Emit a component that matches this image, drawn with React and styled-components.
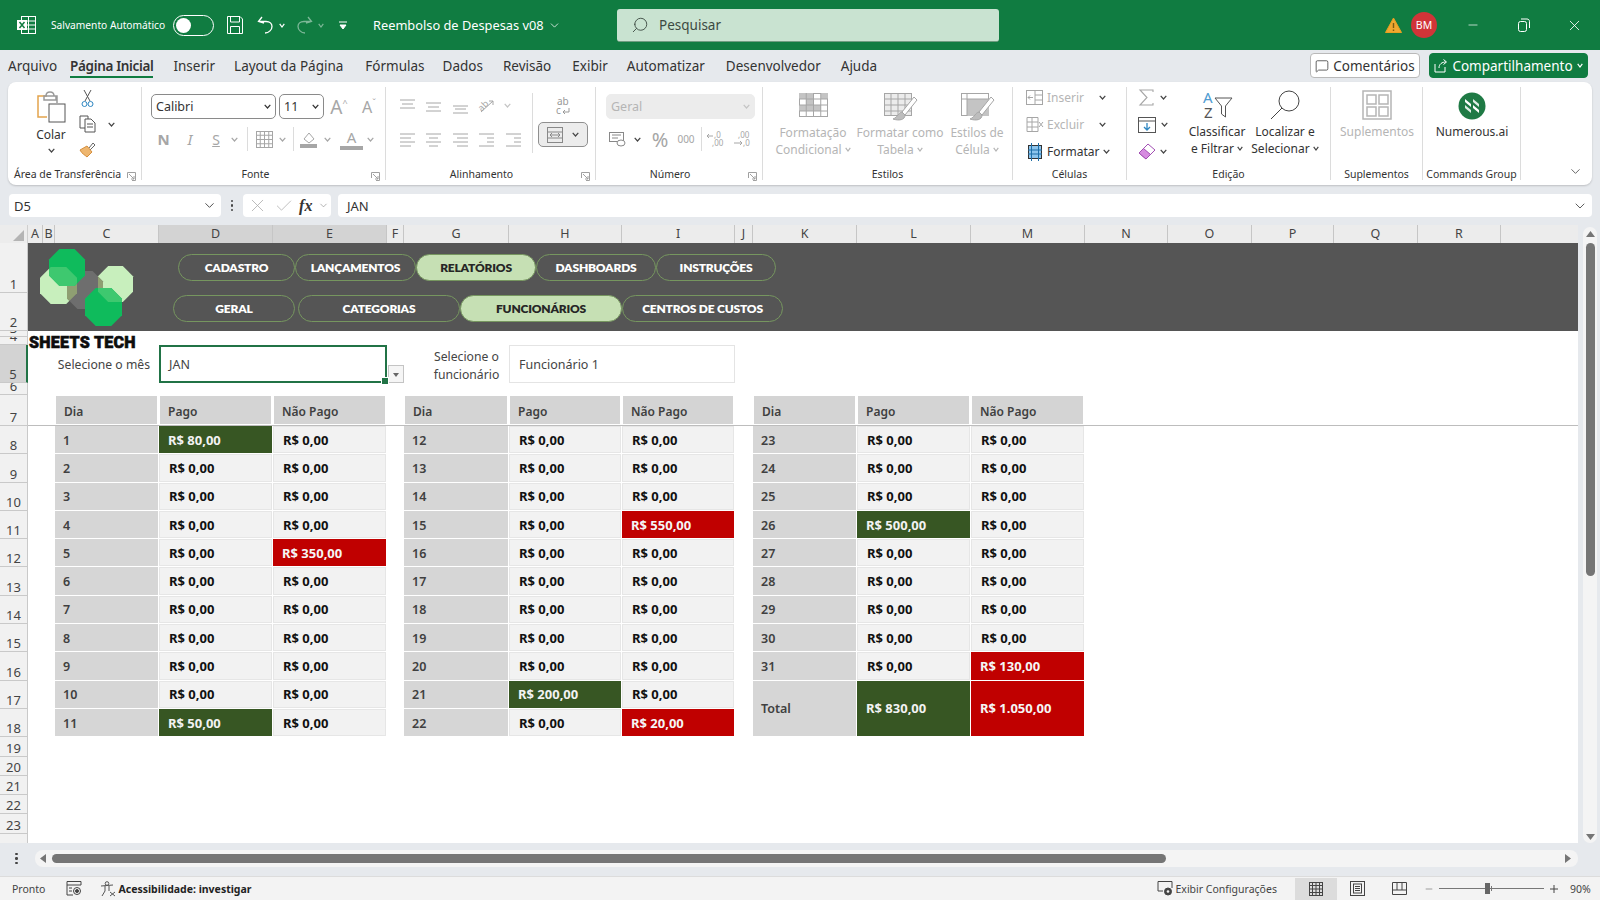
import React from 'react';
import styled, { createGlobalStyle } from 'styled-components';
import { Minus, X, ChevronDown, Search, MessageSquare, Check } from 'lucide-react';

const UI = '"Noto Sans", "Open Sans", sans-serif';
const MUTED = '#a6a6a6';

const COLS = [
  ['A', 15], ['B', 12], ['C', 104], ['D', 114], ['E', 114], ['F', 17], ['G', 105], ['H', 113], ['I', 113], ['J', 18],
  ['K', 104], ['L', 114], ['M', 114], ['N', 83], ['O', 84], ['P', 82], ['Q', 84], ['R', 83], ['', 77],
];
const ROWS = [50, 38, 6, 8, 38, 12, 31, ...Array(11).fill(28.3), ...Array(5).fill(19.3), 11];
const colTemplate = COLS.map(c => c[1] + 'px').join(' ');
const rowTemplate = ROWS.map(r => r + 'px').join(' ');

const Global = createGlobalStyle`
  html, body { margin: 0; padding: 0; width: 1600px; height: 900px; overflow: hidden; background: #e6e9ed; }
  body { font-family: ${UI}; color: #333; }
  * { box-sizing: border-box; }
`;

const Shell = styled.div`
  width: 1600px;
  height: 900px;
  display: flex;
  flex-direction: column;
`;

/* title bar */
const TitleBar = styled.div`
  height: 50px;
  flex: none;
  background: #107c41;
  color: #fff;
  display: flex;
  align-items: center;
  padding-left: 16px;
`;
const AutoSave = styled.span`
  font-size: 10.2px;
  margin-left: 15px;
  width: 122px;
  white-space: nowrap;
`;
const Toggle = styled.div`
  width: 41px;
  height: 21px;
  border: 1.5px solid #fff;
  border-radius: 11px;
  padding: 2px;
  margin-right: 13px;
  &::before {
    content: '';
    display: block;
    width: 15px;
    height: 15px;
    border-radius: 50%;
    background: #fff;
  }
`;
const BarSlot = styled.div`
  width: ${p => p.$w}px;
  margin-left: ${p => p.$ml || 0}px;
  flex: none;
  display: flex;
  justify-content: center;
  align-items: center;
  opacity: ${p => (p.$dim ? 0.45 : 1)};
`;
const DocTitle = styled.div`
  margin-left: 26px;
  width: 244px;
  font-size: 12.8px;
  display: flex;
  align-items: center;
  gap: 4px;
  white-space: nowrap;
`;
const SearchBox = styled.div`
  width: 382px;
  height: 33px;
  background: #c9e3d1;
  border-radius: 3px;
  border-bottom: 1px solid #6f9c80;
  display: flex;
  align-items: center;
  padding-left: 14px;
  gap: 10px;
  color: #3c4a42;
  font-size: 13.5px;
`;
const TitleRight = styled.div`
  margin-left: auto;
  display: flex;
  align-items: center;
`;
const Avatar = styled.div`
  width: 26px;
  height: 26px;
  border-radius: 50%;
  background: #d13438;
  font-size: 10.5px;
  display: flex;
  align-items: center;
  justify-content: center;
  margin: 0 10px 0 9px;
`;
const WinBtn = styled.div`
  width: 51px;
  display: flex;
  justify-content: center;
`;

/* tabs */
const TabBar = styled.div`
  height: 32px;
  flex: none;
  display: flex;
  align-items: flex-start;
  padding-left: 8px;
  position: relative;
`;
const Tab = styled.div`
  height: 28px;
  margin-right: ${p => p.$gap}px;
  padding-top: 5px;
  font-size: 13.5px;
  line-height: 22px;
  color: #333;
  font-weight: ${p => (p.$on ? 600 : 400)};
  letter-spacing: ${p => (p.$on ? '-0.35px' : '0')};
  border-bottom: 2px solid ${p => (p.$on ? '#107c41' : 'transparent')};
  white-space: nowrap;
`;
const TabActions = styled.div`
  position: absolute;
  right: 12px;
  top: 3px;
  display: flex;
  gap: 9px;
`;
const CommentBtn = styled.div`
  width: 110px;
  height: 25px;
  background: #fff;
  border: 1px solid #b9b9b9;
  border-radius: 4px;
  font-size: 13.5px;
  display: flex;
  align-items: center;
  justify-content: center;
  gap: 4px;
`;
const ShareBtn = styled(CommentBtn)`
  width: 159px;
  background: #107c41;
  border-color: #107c41;
  color: #fff;
`;

/* ribbon */
const Ribbon = styled.div`
  height: 103px;
  flex: none;
  margin: 0 8px;
  background: #fff;
  border-radius: 8px;
  box-shadow: 0 1px 2px rgba(0, 0, 0, 0.18);
  display: flex;
  padding-top: 5px;
  position: relative;
`;
const Group = styled.div`
  width: ${p => p.$w}px;
  height: 93px;
  flex: none;
  display: flex;
  flex-direction: column;
  border-right: ${p => (p.$plain ? 'none' : '1px solid #dcdcdc')};
  position: relative;
`;
const GroupBody = styled.div`
  flex: 1;
  display: flex;
  min-height: 0;
  padding: ${p => p.$pad || '0'};
`;
const GroupLabel = styled.div`
  height: 18px;
  font-size: 10.5px;
  line-height: 25px;
  text-align: center;
  color: #333;
  white-space: nowrap;
  padding-right: ${p => p.$shift || 0}px;
`;
const Launcher = styled.svg`
  position: absolute;
  right: 5px;
  bottom: -1px;
`;
const Stack = styled.div`
  display: flex;
  flex-direction: column;
  align-items: ${p => p.$align || 'center'};
  width: ${p => (p.$w ? p.$w + 'px' : 'auto')};
  gap: ${p => p.$gap || 0}px;
  padding-top: ${p => p.$top || 0}px;
  flex: none;
`;
const Row = styled.div`
  display: flex;
  align-items: center;
  height: ${p => p.$h || 25}px;
  margin-top: ${p => p.$mt || 0}px;
  gap: ${p => p.$gap || 0}px;
`;
const Slot = styled.div`
  width: ${p => p.$w}px;
  flex: none;
  display: flex;
  align-items: center;
  justify-content: center;
  color: ${p => (p.$dim ? MUTED : '#444')};
  font-size: ${p => p.$size || 13}px;
  font-weight: ${p => p.$weight || 400};
  font-style: ${p => (p.$italic ? 'italic' : 'normal')};
  text-decoration: ${p => (p.$under ? 'underline' : 'none')};
`;
const Rule = styled.div`
  width: 1px;
  height: ${p => p.$h || 24}px;
  background: #dcdcdc;
  flex: none;
  margin: 0 ${p => p.$m || 0}px;
`;
const DropBox = styled.div`
  width: ${p => p.$w}px;
  height: 25px;
  flex: none;
  border: 1px solid ${p => (p.$off ? '#ececec' : '#8a8a8a')};
  border-radius: 5px;
  background: ${p => (p.$off ? '#ececec' : '#fff')};
  color: ${p => (p.$off ? '#b5b5b5' : '#333')};
  font-size: 12.5px;
  display: flex;
  align-items: center;
  justify-content: space-between;
  padding: 0 4px;
`;
const BigLabel = styled.div`
  font-size: 12px;
  line-height: 17px;
  display: flex;
  align-items: center;
  justify-content: center;
  gap: 3px;
  white-space: nowrap;
  color: ${p => (p.$dim ? '#b5b5b5' : '#333')};
  margin-top: ${p => p.$mt || 0}px;
`;
const MergeBtn = styled.div`
  width: 50px;
  height: 25px;
  border: 1.5px solid #8f8f8f;
  border-radius: 5px;
  background: #ececec;
  display: flex;
  align-items: center;
  justify-content: space-around;
  padding: 0 4px;
  margin-top: 4px;
`;
const CellAction = styled.div`
  height: 22px;
  display: flex;
  align-items: center;
  gap: 4px;
  font-size: 12px;
  color: ${p => (p.$dim ? '#b5b5b5' : '#333')};
  white-space: nowrap;
`;
const ChevSlot = styled.span`
  margin-left: auto;
  display: flex;
`;
const Collapse = styled.div`
  position: absolute;
  right: 9px;
  bottom: 6px;
  color: #444;
  display: flex;
`;
const Sup = styled.span`
  font-size: 9px;
  margin-top: -8px;
`;
const FontColor = styled.div`
  width: 23px;
  margin-left: 6px;
  text-align: center;
  font-size: 15px;
  line-height: 18px;
  color: ${MUTED};
  border-bottom: 4px solid ${MUTED};
  flex: none;
`;
const SmallNum = styled.text`
  font-size: 8px;
  font-family: "Noto Sans", sans-serif;
  fill: ${MUTED};
  stroke: none;
`;

/* formula bar */
const FormulaBar = styled.div`
  height: 23px;
  flex: none;
  margin: 9px 8px 8px 9px;
  display: flex;
  align-items: stretch;
`;
const FBox = styled.div`
  background: #fff;
  border-radius: 4px;
  font-size: 13px;
  display: flex;
  align-items: center;
  width: ${p => (p.$w ? p.$w + 'px' : 'auto')};
  flex: ${p => (p.$w ? 'none' : 1)};
  margin-left: ${p => p.$ml || 0}px;
  padding: ${p => p.$pad || '0 6px'};
  justify-content: space-between;
`;
const Dots = styled.div`
  width: ${p => p.$w || 22}px;
  flex: none;
  display: flex;
  flex-direction: column;
  align-items: center;
  justify-content: center;
  gap: 2px;
  i { width: 2.5px; height: 2.5px; border-radius: 50%; background: #444; display: block; }
`;
const Fx = styled.span`
  font-family: "Liberation Serif", serif;
  font-style: italic;
  font-weight: 700;
  font-size: 16px;
  color: #333;
`;

/* workbook */
const Workbook = styled.div`
  height: 618px;
  flex: none;
  display: grid;
  grid-template-columns: 28px 1550px 22px;
  grid-template-rows: 18px 600px;
`;
const Corner = styled.div`
  background: #ececec;
  border-right: 1px solid #cfcfcf;
  display: flex;
  align-items: flex-end;
  justify-content: flex-end;
  padding: 0 3px 2px 0;
`;
const ColHeads = styled.div`
  display: grid;
  grid-template-columns: ${colTemplate};
  background: #ececec;
`;
const ColHead = styled.div`
  font-size: 12.5px;
  line-height: 18px;
  text-align: center;
  color: #444;
  background: ${p => (p.$on ? '#d3d3d3' : 'transparent')};
  border-right: 1px solid ${p => (p.$last ? 'transparent' : '#c6c6c6')};
  border-bottom: 2px solid ${p => (p.$on ? '#217346' : '#ececec')};
`;
const RowHeads = styled.div`
  display: grid;
  grid-template-rows: ${rowTemplate};
  background: #f1f1f1;
  overflow: hidden;
`;
const RowHead = styled.div`
  overflow: hidden;
  display: flex;
  align-items: ${p => (p.$cut ? 'flex-start' : 'flex-end')};
  padding-top: ${p => (p.$cut ? 6 : 0)}px;
  justify-content: center;
  font-size: 13px;
  line-height: 16px;
  color: #444;
  background: ${p => (p.$on ? '#d3d3d3' : 'transparent')};
  border-bottom: ${p => (p.$cut ? 'none' : '1px solid #c9c9c9')};
  border-right: ${p => (p.$on ? '2px solid #217346' : '1px solid #c9c9c9')};
`;
const Sheet = styled.div`
  background: #fff;
  display: grid;
  grid-template-columns: ${colTemplate};
  grid-template-rows: ${rowTemplate};
  position: relative;
  overflow: hidden;
`;
const Banner = styled.div`
  grid-column: 1 / -1;
  grid-row: 1 / 3;
  background: #555555;
  display: flex;
  padding-left: 12px;
`;
const Logo = styled.svg`
  flex: none;
  margin-top: 6px;
`;
const PillStack = styled.div`
  margin-left: 39px;
  padding-top: 11px;
  display: flex;
  flex-direction: column;
  gap: 14px;
`;
const PillRow = styled.div`
  display: flex;
  padding-left: ${p => p.$indent || 0}px;
`;
const Pill = styled.div`
  width: ${p => p.$w}px;
  height: 27px;
  margin-right: ${p => p.$gap || 0}px;
  border: 1px solid #76965f;
  border-radius: 14px;
  background: ${p => (p.$on ? '#c6e0b4' : 'transparent')};
  color: ${p => (p.$on ? '#262626' : '#fff')};
  font-family: Lato, sans-serif;
  font-weight: 800;
  font-size: 12px;
  letter-spacing: -0.2px;
  display: flex;
  align-items: center;
  justify-content: center;
  white-space: nowrap;
`;
const Brand = styled.div`
  position: absolute;
  left: 1px;
  top: 89px;
  font-family: Roboto, sans-serif;
  font-weight: 900;
  font-size: 16px;
  line-height: 22px;
  color: #0d0d0d;
  white-space: nowrap;
  letter-spacing: 0.3px;
  -webkit-text-stroke: 0.6px #0d0d0d;
`;
const FieldLabel = styled.div`
  grid-column: ${p => p.$col};
  grid-row: 5;
  font-size: 12.2px;
  line-height: 18.5px;
  color: #444;
  display: flex;
  align-items: center;
  justify-content: ${p => (p.$center ? 'center' : 'flex-end')};
  text-align: center;
  padding: ${p => (p.$center ? '4px 0 0 20px' : '3px 9px 0 0')};
  white-space: nowrap;
`;
const MonthField = styled.div`
  grid-column: 4 / 6;
  grid-row: 5;
  border: 2px solid #217346;
  font-size: 12.5px;
  color: #444;
  display: flex;
  align-items: center;
  padding-left: 8px;
  position: relative;
  &::after {
    content: '';
    position: absolute;
    right: -4px;
    bottom: -4px;
    width: 6px;
    height: 6px;
    background: #217346;
    border: 1px solid #fff;
  }
`;
const DropArrow = styled.div`
  grid-column: 6;
  grid-row: 5;
  align-self: end;
  height: 18px;
  border: 1px solid #c4c4c4;
  background: #f5f5f5;
  margin-left: 1px;
  display: flex;
  align-items: center;
  justify-content: center;
  &::before {
    content: '';
    border: 3px solid transparent;
    border-top: 4px solid #666;
    margin-top: 4px;
  }
`;
const EmployeeField = styled.div`
  grid-column: 8 / 10;
  grid-row: 5;
  border: 1px solid #e4e4e4;
  font-size: 12.5px;
  color: #444;
  display: flex;
  align-items: center;
  padding-left: 9px;
`;
const FreezeLine = styled.div`
  grid-column: 1 / -1;
  grid-row: 7;
  align-self: end;
  height: 1px;
  background: #bdbdbd;
`;
const Table = styled.div`
  grid-column: ${p => p.$col} / span 3;
  grid-row: 7 / span 12;
  display: grid;
  grid-template-columns: subgrid;
  grid-template-rows: subgrid;
`;
const TONES = {
  head: 'background:#d4d4d4;color:#404040;font-size:12px;font-weight:600;padding-top:2px;',
  dia: 'background:#d6d6d6;color:#404040;font-size:12.5px;font-weight:600;padding-top:1px;',
  val: 'background:#f2f2f2;color:#111;border:1px solid #e6e6e6;font-size:13px;font-weight:700;',
  green: 'background:#375623;color:#f2f2f2;font-size:13px;font-weight:700;',
  red: 'background:#c00000;color:#f5f5f5;font-size:13px;font-weight:700;',
};
const Cell = styled.div`
  ${p => TONES[p.$tone]}
  display: flex;
  align-items: center;
  padding-left: ${p => (p.$tone === 'head' || p.$tone === 'dia' ? 8 : 9)}px;
  margin: ${p => (p.$tone === 'head' ? '1px 2px 2px 1px' : '0 1px 1px 0')};
  grid-row: ${p => (p.$span ? 'span 2' : 'auto')};
  white-space: nowrap;
`;

/* scrollbars */
const VTrack = styled.div`
  grid-column: 3;
  grid-row: 1 / 3;
  margin: 2px 3px 0 5px;
  background: #f4f4f4;
  border-radius: 7px;
  display: flex;
  flex-direction: column;
  align-items: center;
  padding-top: 4px;
`;
const VThumb = styled.div`
  width: 9px;
  height: 333px;
  margin-top: 6px;
  background: #757575;
  border-radius: 5px;
`;
const VDown = styled.div`
  margin-top: auto;
  margin-bottom: 3px;
  display: flex;
`;
const HBar = styled.div`
  height: 17px;
  flex: none;
  margin: 7px 22px 9px 0;
  display: flex;
  align-items: center;
`;
const HTrack = styled.div`
  flex: 1;
  height: 17px;
  background: #f4f4f4;
  border-radius: 8px;
  margin-left: 2px;
  display: flex;
  align-items: center;
  padding: 0 4px 0 5px;
`;
const HThumb = styled.div`
  width: 1114px;
  height: 9px;
  margin-left: 6px;
  background: #757575;
  border-radius: 5px;
`;
const HEnd = styled.div`
  margin-left: auto;
  display: flex;
  margin-right: 3px;
`;

/* status bar */
const StatusBar = styled.div`
  flex: 1;
  background: #f3f3f3;
  border-top: 1px solid #dcdcdc;
  display: flex;
  align-items: center;
  padding-left: 12px;
  font-size: 10.5px;
  color: #444;
`;
const StatusItem = styled.div`
  display: flex;
  align-items: center;
  gap: ${p => (p.$tight ? 0 : 2)}px;
  margin-left: ${p => p.$ml || 0}px;
  font-weight: ${p => (p.$bold ? 700 : 400)};
  color: ${p => (p.$bold ? '#222' : '#444')};
  white-space: nowrap;
`;
const ViewBtn = styled.div`
  width: 42px;
  height: 22px;
  display: flex;
  align-items: center;
  justify-content: center;
  background: ${p => (p.$on ? '#dcdcdc' : 'transparent')};
`;
const ZoomSlider = styled.div`
  width: 105px;
  height: 1px;
  background: #777;
  position: relative;
  margin: 0 4px 0 3px;
  &::before {
    content: '';
    position: absolute;
    left: 46px;
    top: -5px;
    width: 5px;
    height: 11px;
    background: #666;
  }
  &::after {
    content: '';
    position: absolute;
    left: 52px;
    top: -2px;
    width: 1px;
    height: 5px;
    background: #777;
  }
`;
const StatusText = styled.span`
  margin-left: 10px;
`;

/* icons */
const Ico = ({ w, h = w, c = '#666', sw = 1, children, fill = 'none' }) => (
  <svg width={w} height={h} viewBox={`0 0 ${w} ${h}`} fill={fill} stroke={c} strokeWidth={sw} style={{ flex: 'none', display: 'block', overflow: 'visible' }}>
    {children}
  </svg>
);
const Chev = ({ c = '#444', w = 7 }) => (
  <Ico w={w} h={5} c={c} sw={1.2}><path d={`M0.7 0.8 L${w / 2} 4 L${w - 0.7} 0.8`} /></Ico>
);
const Lines = ({ ys, xs, c = MUTED }) => (
  <Ico w={17} h={16} c={c}>
    {ys.map((y, i) => <path key={i} d={`M${xs[i][0]} ${y}H${xs[i][1]}`} />)}
  </Ico>
);
const GridIcon = ({ c = '#555', w = 29, h = 24, fills = [] }) => (
  <Ico w={w} h={h} c={c}>
    <rect x=".5" y=".5" width={w - 1} height={h - 1} />
    {fills.map((f, i) => <rect key={i} x={f[0]} y={f[1]} width={f[2]} height={f[3]} fill="#c4c4c4" stroke="none" />)}
    {[1, 2, 3].map(i => <path key={i} d={`M${(w / 4) * i} 0V${h}`} />)}
    {[1, 2, 3].map(i => <path key={'y' + i} d={`M0 ${(h / 4) * i}H${w}`} />)}
  </Ico>
);
const Brush = () => (
  <g>
    <path d="M30 4 L18 19 L21 22 L33 7 Z" fill="#fff" stroke="#a6a6a6" />
    <path d="M18 19 C14 20 14 24 9 26 C15 28 21 27 21 22 Z" fill="#bdbdbd" stroke="#a6a6a6" />
  </g>
);
const GridMerge = () => (
  <Ico w={16} h={16} c="#888">
    <rect x=".5" y=".5" width="15" height="15" />
    <path d="M0 5H16M0 11H16M3 8H13M3 8L5 6M3 8L5 10M13 8L11 6M13 8L11 10" />
  </Ico>
);

const octa = (x, y, w, h) => {
  const c = Math.min(w, h) * 0.29;
  return `${x + c},${y} ${x + w - c},${y} ${x + w},${y + c} ${x + w},${y + h - c} ${x + w - c},${y + h} ${x + c},${y + h} ${x},${y + h - c} ${x},${y + c}`;
};
const LIGHT_L = octa(0, 18, 37, 37);
const LIGHT_R = octa(58, 17, 35, 36);
const GRAY = octa(27, 22, 36, 38);
const DARK_T = octa(9, 0, 36, 37);
const DARK_B = octa(45, 39, 37, 38);

const LogoMark = () => (
  <Logo width="94" height="78" viewBox="0 0 94 78">
    <defs>
      <clipPath id="dt"><polygon points={DARK_T} /></clipPath>
      <clipPath id="db"><polygon points={DARK_B} /></clipPath>
      <clipPath id="gr"><polygon points={GRAY} /></clipPath>
    </defs>
    <polygon points={LIGHT_L} fill="#c8efbd" />
    <polygon points={LIGHT_R} fill="#c8efbd" />
    <polygon points={GRAY} fill="#6e6e6e" />
    <g clipPath="url(#gr)">
      <polygon points={LIGHT_L} fill="#8f9f72" />
      <polygon points={LIGHT_R} fill="#8f9f72" />
    </g>
    <polygon points={DARK_T} fill="#0fbb5c" />
    <polygon points={DARK_B} fill="#0fbb5c" />
    <g clipPath="url(#dt)"><polygon points={LIGHT_L} fill="#3ec86f" /></g>
    <g clipPath="url(#db)"><polygon points={LIGHT_R} fill="#3ec86f" /></g>
  </Logo>
);

const Launch = () => (
  <Launcher width="9" height="9" viewBox="0 0 9 9" fill="none" stroke="#a0a0a0">
    <path d="M.5 6V.5H8.5V8.5H5M2 2L7 7M7 4V7H4" />
  </Launcher>
);

/* data */
const TOP_TABS = [['Arquivo', 13], ['Página Inicial', 20], ['Inserir', 19], ['Layout da Página', 22], ['Fórmulas', 18], ['Dados', 20], ['Revisão', 21], ['Exibir', 19], ['Automatizar', 21], ['Desenvolvedor', 20], ['Ajuda', 0]];
const NAV_1 = [['CADASTRO', 117], ['LANÇAMENTOS', 121], ['RELATÓRIOS', 120, true], ['DASHBOARDS', 120], ['INSTRUÇÕES', 120]];
const NAV_2 = [['GERAL', 122, false, 3], ['CATEGORIAS', 162], ['FUNCIONÁRIOS', 162, true], ['CENTROS DE CUSTOS', 161]];

const brl = v => 'R$ ' + v + ',00';
const rows = (from, to, marks) => {
  const out = [];
  for (let d = from; d <= to; d++) out.push({ d, pago: 0, nao: 0, ...marks[d] });
  return out;
};
const TABLES = [
  { col: 3, rows: rows(1, 11, { 1: { pago: 80 }, 5: { nao: 350 }, 11: { pago: 50 } }) },
  { col: 7, rows: rows(12, 22, { 15: { nao: 550 }, 21: { pago: 200 }, 22: { nao: 20 } }) },
  { col: 11, rows: rows(23, 31, { 26: { pago: 500 }, 31: { nao: 130 } }), total: ['830', '1.050'] },
];

const Grid = ({ t }) => (
  <Table $col={t.col}>
    <Cell $tone="head">Dia</Cell>
    <Cell $tone="head">Pago</Cell>
    <Cell $tone="head">Não Pago</Cell>
    {t.rows.map(r => (
      <React.Fragment key={r.d}>
        <Cell $tone="dia">{r.d}</Cell>
        <Cell $tone={r.pago ? 'green' : 'val'}>{brl(r.pago)}</Cell>
        <Cell $tone={r.nao ? 'red' : 'val'}>{brl(r.nao)}</Cell>
      </React.Fragment>
    ))}
    {t.total && (
      <>
        <Cell $tone="dia" $span>Total</Cell>
        <Cell $tone="green" $span>{brl(t.total[0])}</Cell>
        <Cell $tone="red" $span>{brl(t.total[1])}</Cell>
      </>
    )}
  </Table>
);

const TopBar = () => (
  <TitleBar>
    <Ico w={20} h={20} c="#fff">
      <rect x="5.5" y="1.5" width="14" height="17" />
      <path d="M5.5 6H19.5M5.5 10H19.5M5.5 14H19.5M12.5 1.5V18.5" />
      <rect x="1" y="5" width="10" height="10" fill="#fff" stroke="none" />
      <path d="M3.5 7L8.5 13M8.5 7L3.5 13" stroke="#107c41" strokeWidth="1.5" />
    </Ico>
    <AutoSave>Salvamento Automático</AutoSave>
    <Toggle />
    <BarSlot $w={16}>
      <Ico w={16} h={18} c="#fff"><path d="M.5.5H13L15.5 3V17.5H.5Z" /><path d="M3.5.5V6H12.5V.5M3.5 17.5V10.5H12.5V17.5" /></Ico>
    </BarSlot>
    <BarSlot $w={16} $ml={14}>
      <Ico w={16} h={18} c="#fff" sw={1.3}><path d="M5 1L1.5 5.5L7 7M1.5 5.5H9C13 5.5 15 8 15 10.5C15 13.5 12 17 8 17" /></Ico>
    </BarSlot>
    <BarSlot $w={8} $ml={5}><Chev c="#fff" w={6} /></BarSlot>
    <BarSlot $w={16} $ml={11} $dim>
      <Ico w={16} h={18} c="#fff" sw={1.3}><path d="M11 1L14.5 5.5L9 7M14.5 5.5H7C3 5.5 1 8 1 10.5C1 13.5 4 17 8 17" /></Ico>
    </BarSlot>
    <BarSlot $w={8} $ml={4} $dim><Chev c="#fff" w={6} /></BarSlot>
    <BarSlot $w={8} $ml={14}>
      <Ico w={8} h={9} c="#fff"><path d="M0 1H8" /><path d="M1 4H7L4 8Z" fill="#fff" /></Ico>
    </BarSlot>
    <DocTitle><span>Reembolso de Despesas v08</span><ChevronDown size={13} strokeWidth={1.4} /></DocTitle>
    <SearchBox>
      <Search size={18} strokeWidth={1.2} style={{ transform: 'scaleX(-1)' }} />
      Pesquisar
    </SearchBox>
    <TitleRight>
      <Ico w={17} h={16} c="#7a5a10">
        <path d="M8.5 1L16.5 15.5H.5Z" fill="#f0a830" stroke="#e8a020" />
        <path d="M8.5 6V11M8.5 12.5V14" strokeWidth="1.4" />
      </Ico>
      <Avatar>BM</Avatar>
      <WinBtn><Minus size={14} strokeWidth={1.2} /></WinBtn>
      <WinBtn>
        <Ico w={12} h={14} c="#fff"><rect x=".5" y="3.5" width="8" height="10" rx="2" /><path d="M3 1H9C10.5 1 11.5 2 11.5 3.5V10" /></Ico>
      </WinBtn>
      <WinBtn><X size={17} strokeWidth={1.2} /></WinBtn>
    </TitleRight>
  </TitleBar>
);

const Tabs = () => (
  <TabBar>
    {TOP_TABS.map(([t, gap]) => <Tab key={t} $gap={gap} $on={t === 'Página Inicial'}>{t}</Tab>)}
    <TabActions>
      <CommentBtn><MessageSquare size={14} strokeWidth={1.3} />Comentários</CommentBtn>
      <ShareBtn>
        <Ico w={14} h={14} c="#fff"><path d="M1 5V13H11V8M5 9C5 5 8 3 12 3M9.5.5L12.5 3L9.5 5.5" /></Ico>
        Compartilhamento
        <Chev c="#fff" w={6} />
      </ShareBtn>
    </TabActions>
  </TabBar>
);

const Transfer = () => (
  <Group $w={134}>
    <GroupBody $pad="0 0 0 18px">
      <Stack $w={50} $top={4}>
        <Ico w={30} h={32} c="#e3a44c" sw={1.5}>
          <path d="M11 5H2V26H11" />
          <path d="M10 5C10 2 12 1 14 1C16 1 18 2 18 5H21V12M8 5H20V9H8Z" stroke="#9a9a9a" />
          <rect x="13" y="13" width="16" height="18" fill="#fff" stroke="#555" strokeWidth="1" />
        </Ico>
        <BigLabel $mt={3}>Colar</BigLabel>
        <Row $h={14}><Chev /></Row>
      </Stack>
      <Stack $w={40} $align="flex-start">
        <Row $h={24}>
          <Slot $w={22}>
            <Ico w={13} h={18} c="#555"><path d="M3 0L9 11M10 0L4 11" /><circle cx="3.5" cy="14" r="2.5" stroke="#2e86c1" /><circle cx="9.5" cy="14" r="2.5" stroke="#2e86c1" /></Ico>
          </Slot>
        </Row>
        <Row $h={27} $mt={1}>
          <Slot $w={22}>
            <Ico w={17} h={18} c="#555"><path d="M6 13H1V1H9V4" /><path d="M6 4H12L16 8V17H6ZM8 9H14M8 12H14" /></Ico>
          </Slot>
          <Slot $w={26}><Chev /></Slot>
        </Row>
        <Row $h={26}>
          <Slot $w={22}>
            <Ico w={18} h={17} c="#666"><path d="M11 7L15 2L17 4L12 9" /><path d="M2 9L9 5L14 11L9 16C7 14 4 13 2 9Z" fill="#eeb66f" stroke="#d58f3d" /></Ico>
          </Slot>
        </Row>
      </Stack>
    </GroupBody>
    <GroupLabel $shift={14}>Área de Transferência</GroupLabel>
    <Launch />
  </Group>
);

const Font = () => (
  <Group $w={244}>
    <GroupBody $pad="7px 0 0 9px">
      <Stack $align="flex-start">
        <Row $gap={3}>
          <DropBox $w={125}>Calibri <Chev c="#333" /></DropBox>
          <DropBox $w={45}>11 <Chev c="#333" /></DropBox>
          <Slot $w={24} $dim $size={19}>A<Sup>^</Sup></Slot>
          <Slot $w={30} $dim $size={16}>A<Sup>ˇ</Sup></Slot>
        </Row>
        <Row $mt={8} $h={24}>
          <Slot $w={25} $dim $size={15} $weight={700}>N</Slot>
          <Slot $w={28} $dim $size={15} $italic>I</Slot>
          <Slot $w={24} $dim $size={14} $under>S</Slot>
          <Slot $w={12}><Chev c={MUTED} /></Slot>
          <Rule $m={7} />
          <Slot $w={18}><GridIcon c={MUTED} w={17} h={17} /></Slot>
          <Slot $w={18}><Chev c={MUTED} /></Slot>
          <Rule $m={2} />
          <Slot $w={24}>
            <Ico w={17} h={18} c={MUTED}><path d="M4 9L9 3L14 9L9 13Z" /><rect x="0" y="14" width="17" height="4" fill={MUTED} stroke="none" /></Ico>
          </Slot>
          <Slot $w={14}><Chev c={MUTED} /></Slot>
          <FontColor>A</FontColor>
          <Slot $w={14}><Chev c={MUTED} /></Slot>
        </Row>
      </Stack>
    </GroupBody>
    <GroupLabel $shift={16}>Fonte</GroupLabel>
    <Launch />
  </Group>
);

const Align = () => (
  <Group $w={210}>
    <GroupBody $pad="6px 0 0 8px">
      <Stack $w={138} $align="flex-start">
        <Row>
          <Slot $w={26.5}><Lines ys={[2, 6, 10]} xs={[[1, 16], [3, 14], [1, 16]]} /></Slot>
          <Slot $w={26.5}><Lines ys={[5, 9, 13]} xs={[[1, 16], [3, 14], [1, 16]]} /></Slot>
          <Slot $w={26.5}><Lines ys={[8, 11, 15]} xs={[[1, 16], [3, 14], [1, 16]]} /></Slot>
          <Slot $w={26.5}>
            <Ico w={17} h={16} c={MUTED}>
              <text x="0" y="11" fontSize="9" fill={MUTED} stroke="none" fontFamily="Noto Sans, sans-serif" transform="rotate(-45 5 8)">ab</text>
              <path d="M3 14L15 3M15 3H11M15 3V7" />
            </Ico>
          </Slot>
          <Slot $w={14}><Chev c="#c4c4c4" /></Slot>
        </Row>
        <Row $mt={9} $h={24}>
          <Slot $w={26.5}><Lines ys={[3, 7, 11, 15]} xs={[[1, 16], [1, 12], [1, 16], [1, 12]]} /></Slot>
          <Slot $w={26.5}><Lines ys={[3, 7, 11, 15]} xs={[[1, 16], [4, 13], [1, 16], [4, 13]]} /></Slot>
          <Slot $w={26.5}><Lines ys={[3, 7, 11, 15]} xs={[[1, 16], [5, 16], [1, 16], [5, 16]]} /></Slot>
          <Slot $w={26.5}><Lines ys={[3, 7, 11, 15]} xs={[[1, 16], [9, 16], [9, 16], [1, 16]]} /></Slot>
          <Slot $w={26.5}><Lines ys={[3, 7, 11, 15]} xs={[[1, 16], [9, 16], [9, 16], [1, 16]]} /></Slot>
        </Row>
      </Stack>
      <Rule $h={60} />
      <Stack $w={60} $align="center">
        <Row>
          <Ico w={16} h={20} c="#999">
            <text x="2" y="9" fontSize="10" fill="#999" stroke="none" fontFamily="Noto Sans, sans-serif">ab</text>
            <text x="1" y="18" fontSize="10" fill="#999" stroke="none" fontFamily="Noto Sans, sans-serif">c</text>
            <path d="M14 12V16H8M10 14L8 16L10 18" />
          </Ico>
        </Row>
        <MergeBtn>
          <GridMerge />
          <Chev />
        </MergeBtn>
      </Stack>
    </GroupBody>
    <GroupLabel $shift={18}>Alinhamento</GroupLabel>
    <Launch />
  </Group>
);

const Numero = () => (
  <Group $w={167}>
    <GroupBody $pad="7px 0 0 10px">
      <Stack $align="flex-start">
        <DropBox $w={149} $off>Geral <Chev c="#c4c4c4" /></DropBox>
        <Row $mt={8} $h={24}>
          <Slot $w={22}>
            <Ico w={17} h={16} c="#888"><rect x=".5" y="1.5" width="14" height="9" /><path d="M3 4H12M3 7H9" /><ellipse cx="12" cy="12" rx="4" ry="3" fill="#fff" /></Ico>
          </Slot>
          <Slot $w={18}><Chev /></Slot>
          <Slot $w={28} $dim $size={20}>%</Slot>
          <Slot $w={24} $dim $size={10}>000</Slot>
          <Rule $m={3} />
          <Slot $w={21}>
            <Ico w={17} h={16} c={MUTED}><SmallNum x="7" y="7">,0</SmallNum><SmallNum x="5" y="15">,00</SmallNum><path d="M6 5H0M0 5L2 3M0 5L2 7" /></Ico>
          </Slot>
          <Slot $w={32}>
            <Ico w={17} h={16} c={MUTED}><SmallNum x="4" y="7">,00</SmallNum><SmallNum x="9" y="15">,0</SmallNum><path d="M0 12H8M8 12L6 10M8 12L6 14" /></Ico>
          </Slot>
        </Row>
      </Stack>
    </GroupBody>
    <GroupLabel $shift={18}>Número</GroupLabel>
    <Launch />
  </Group>
);

const Styles = () => (
  <Group $w={250}>
    <GroupBody $pad="6px 0 0 8px">
      <Stack $w={84}>
        <GridIcon c={MUTED} fills={[[0, 0, 14, 6], [7, 6, 8, 6], [0, 12, 22, 6], [22, 0, 7, 6]]} />
        <BigLabel $dim $mt={7}>Formatação</BigLabel>
        <BigLabel $dim>Condicional <Chev c="#b5b5b5" w={6} /></BigLabel>
      </Stack>
      <Stack $w={90}>
        <Ico w={33} h={24} c={MUTED}>
          <rect x=".5" y=".5" width="27" height="22" fill="#ececec" />
          <path d="M0 6H28M0 12H28M0 18H28M7 0V23M14 0V23M21 0V23" />
          <Brush />
        </Ico>
        <BigLabel $dim $mt={7}>Formatar como</BigLabel>
        <BigLabel $dim>Tabela <Chev c="#b5b5b5" w={6} /></BigLabel>
      </Stack>
      <Stack $w={64}>
        <Ico w={33} h={24} c={MUTED}>
          <rect x=".5" y=".5" width="27" height="22" />
          <rect x="6" y="6" width="22" height="17" fill="#c4c4c4" stroke="none" />
          <path d="M0 6H28M6 0V23" />
          <Brush />
        </Ico>
        <BigLabel $dim $mt={7}>Estilos de</BigLabel>
        <BigLabel $dim>Célula <Chev c="#b5b5b5" w={6} /></BigLabel>
      </Stack>
    </GroupBody>
    <GroupLabel>Estilos</GroupLabel>
  </Group>
);

const Cells = () => (
  <Group $w={114}>
    <GroupBody $pad="0 0 0 13px">
      <Stack $w={80} $gap={5} $align="stretch">
        <CellAction $dim>
          <Ico w={17} h={15} c={MUTED}>
            <rect x=".5" y=".5" width="16" height="14" />
            <path d="M9 0V15M9 5H17M9 10H17M2 7.5H7M2 7.5L4 5.5M2 7.5L4 9.5" />
          </Ico>
          Inserir
          <ChevSlot><Chev /></ChevSlot>
        </CellAction>
        <CellAction $dim>
          <Ico w={17} h={15} c={MUTED}>
            <path d="M1 .5H12V14.5H1ZM1 5H12M1 10H12M6 0V15M13 5L17 10M17 5L13 10" />
          </Ico>
          Excluir
          <ChevSlot><Chev /></ChevSlot>
        </CellAction>
        <CellAction>
          <Ico w={17} h={17} c="#333">
            <rect x="2.5" y="2.5" width="13" height="13" fill="#8cc4ec" />
            <path d="M2 7H16M2 11H16M5.5 0V18M12.5 0V18" stroke="#1f6fa8" />
          </Ico>
          Formatar
          <ChevSlot><Chev /></ChevSlot>
        </CellAction>
      </Stack>
    </GroupBody>
    <GroupLabel>Células</GroupLabel>
  </Group>
);

const Editing = () => (
  <Group $w={204}>
    <GroupBody $pad="0 0 0 11px">
      <Stack $w={43} $gap={5} $align="flex-start">
        <CellAction>
          <Ico w={18} h={17} c={MUTED} sw={1.1}><path d="M15 3V1H2L9 8.5L2 16H15V14" /></Ico>
          <Chev />
        </CellAction>
        <CellAction>
          <Ico w={19} h={16} c="#555">
            <rect x=".5" y=".5" width="17" height="15" />
            <path d="M0 4H18" />
            <path d="M9 6V13M6 10L9 13L12 10" stroke="#2e86c1" strokeWidth="1.3" />
          </Ico>
          <Chev />
        </CellAction>
        <CellAction>
          <Ico w={18} h={18} c="#a24eb3">
            <path d="M1 11L10 2L17 8L8 17Z" fill="#fff" />
            <path d="M1 11L5.5 6.5L12.5 12.5L8 17Z" fill="#d68be0" />
          </Ico>
          <Chev />
        </CellAction>
      </Stack>
      <Stack $w={72} $top={3}>
        <Ico w={31} h={30} c="#555">
          <text x="1" y="13" fontSize="15" fill="#4e9bd1" stroke="none" fontFamily="Noto Sans, sans-serif">A</text>
          <text x="2" y="28" fontSize="15" fill="#555" stroke="none" fontFamily="Noto Sans, sans-serif">Z</text>
          <path d="M13 8H30L23.5 16V27L19.5 24V16Z" />
        </Ico>
        <BigLabel $mt={3}>Classificar</BigLabel>
        <BigLabel>e Filtrar <Chev w={6} /></BigLabel>
      </Stack>
      <Stack $w={64} $top={3}>
        <Ico w={31} h={30} c="#444">
          <circle cx="19" cy="11" r="10" />
          <path d="M12 18L1 29" />
        </Ico>
        <BigLabel $mt={3}>Localizar e</BigLabel>
        <BigLabel>Selecionar <Chev w={6} /></BigLabel>
      </Stack>
    </GroupBody>
    <GroupLabel>Edição</GroupLabel>
  </Group>
);

const Addins = () => (
  <Group $w={92}>
    <GroupBody>
      <Stack $w={92} $top={3}>
        <Ico w={30} h={30} c="#b5b5b5" sw={1.5}>
          <rect x="1" y="1" width="28" height="28" />
          <rect x="5" y="5" width="9" height="9" />
          <rect x="17" y="5" width="9" height="9" />
          <rect x="5" y="17" width="9" height="9" />
          <rect x="17" y="17" width="9" height="9" />
        </Ico>
        <BigLabel $dim $mt={3}>Suplementos</BigLabel>
      </Stack>
    </GroupBody>
    <GroupLabel>Suplementos</GroupLabel>
  </Group>
);

const Commands = () => (
  <Group $w={98}>
    <GroupBody>
      <Stack $w={98} $top={5}>
        <Ico w={28} h={28} c="none">
          <circle cx="14" cy="14" r="13.5" fill="#1f7a45" />
          <polygon points="7,7 13,12 13,15 7,10" fill="#fff" />
          <polygon points="7,13 13,18 13,21 7,16" fill="#dfeee5" />
          <polygon points="15,7 21,12 21,15 15,10" fill="#dfeee5" />
          <polygon points="15,13 21,18 21,21 15,16" fill="#fff" />
        </Ico>
        <BigLabel $mt={3}>Numerous.ai</BigLabel>
      </Stack>
    </GroupBody>
    <GroupLabel>Commands Group</GroupLabel>
  </Group>
);

const RibbonBar = () => (
  <Ribbon>
    <Transfer />
    <Font />
    <Align />
    <Numero />
    <Styles />
    <Cells />
    <Editing />
    <Addins />
    <Commands />
    <Collapse><ChevronDown size={15} strokeWidth={1.3} /></Collapse>
  </Ribbon>
);

const Formula = () => (
  <FormulaBar>
    <FBox $w={212} $pad="0 4px 0 5px">D5 <ChevronDown size={15} strokeWidth={1.5} color="#444" /></FBox>
    <Dots><i /><i /><i /></Dots>
    <FBox $w={88} $pad="0 2px 0 4px">
      <X size={21} strokeWidth={0.9} color="#aaa" />
      <Check size={20} strokeWidth={0.9} color="#aaa" />
      <Fx>fx</Fx>
      <ChevronDown size={11} strokeWidth={1.2} color="#777" />
    </FBox>
    <FBox $ml={7} $pad="0 4px 0 9px">JAN <ChevronDown size={16} strokeWidth={1.3} color="#444" /></FBox>
  </FormulaBar>
);

const SheetArea = () => (
  <Workbook>
    <Corner>
      <Ico w={11} h={11} c="none" fill="#b4b4b4"><path d="M11 0V11H0Z" /></Ico>
    </Corner>
    <ColHeads>
      {COLS.map(([n], i) => <ColHead key={i} $on={n === 'D' || n === 'E'} $last={n === ''}>{n}</ColHead>)}
    </ColHeads>
    <VTrack>
      <Ico w={9} h={6} c="none" fill="#757575"><path d="M4.5 0L9 6H0Z" /></Ico>
      <VThumb />
      <VDown><Ico w={9} h={6} c="none" fill="#757575"><path d="M0 0H9L4.5 6Z" /></Ico></VDown>
    </VTrack>
    <RowHeads>
      {ROWS.map((_, i) => <RowHead key={i} $on={i === 4} $cut={i === ROWS.length - 1}>{i + 1}</RowHead>)}
    </RowHeads>
    <Sheet>
      <Banner>
        <LogoMark />
        <PillStack>
          <PillRow $indent={5}>
            {NAV_1.map(([t, w, on]) => <Pill key={t} $w={w} $on={on}>{t}</Pill>)}
          </PillRow>
          <PillRow>
            {NAV_2.map(([t, w, on, gap]) => <Pill key={t} $w={w} $on={on} $gap={gap}>{t}</Pill>)}
          </PillRow>
        </PillStack>
      </Banner>
      <Brand>SHEETS TECH</Brand>
      <FieldLabel $col="1 / 4">Selecione o mês</FieldLabel>
      <MonthField>JAN</MonthField>
      <DropArrow />
      <FieldLabel $col="7" $center>Selecione o<br />funcionário</FieldLabel>
      <EmployeeField>Funcionário 1</EmployeeField>
      <FreezeLine />
      {TABLES.map(t => <Grid key={t.col} t={t} />)}
    </Sheet>
  </Workbook>
);

const BottomScroll = () => (
  <HBar>
    <Dots $w={33}><i /><i /><i /></Dots>
    <HTrack>
      <Ico w={6} h={9} c="none" fill="#757575"><path d="M6 0V9L0 4.5Z" /></Ico>
      <HThumb />
      <HEnd><Ico w={6} h={9} c="none" fill="#757575"><path d="M0 0V9L6 4.5Z" /></Ico></HEnd>
    </HTrack>
  </HBar>
);

const Status = () => (
  <StatusBar>
    <StatusItem>Pronto</StatusItem>
    <StatusItem $ml={21}>
      <Ico w={16} h={15} c="#444"><path d="M1 .5H15V4H1ZM1 4V14H7M3 7H6M3 10H6" /><circle cx="11" cy="10" r="3.5" /><circle cx="11" cy="10" r="1.5" fill="#444" /></Ico>
    </StatusItem>
    <StatusItem $ml={18} $bold>
      <Ico w={16} h={16} c="#555"><circle cx="7" cy="2.5" r="1.8" /><path d="M1 5L13 4M5 5V10L2 15M9 5V10M10 11L15 15M15 11L10 15" /></Ico>
      Acessibilidade: investigar
    </StatusItem>
    <StatusItem $ml={906}>
      <Ico w={16} h={15} c="#444"><path d="M1 .5H15V7M1 .5V10H6" /><circle cx="11" cy="10.5" r="3.5" fill="#444" /><circle cx="11" cy="10.5" r="1.3" fill="#f3f3f3" stroke="none" /></Ico>
      Exibir Configurações
    </StatusItem>
    <StatusItem $ml={18} $tight>
      <ViewBtn $on><GridIcon c="#444" w={14} h={14} /></ViewBtn>
      <ViewBtn>
        <Ico w={15} h={15} c="#444"><rect x=".5" y=".5" width="14" height="14" /><rect x="3.5" y="3" width="8" height="9" /><path d="M5 5.5H10M5 7.5H10M5 9.5H10" /></Ico>
      </ViewBtn>
      <ViewBtn>
        <Ico w={15} h={13} c="#444"><path d="M.5.5H14.5V12.5H.5ZM5 .5V8M10 .5V8M.5 8H14.5" /></Ico>
      </ViewBtn>
    </StatusItem>
    <StatusItem $ml={3}>
      <Minus size={10} strokeWidth={1.2} />
      <ZoomSlider />
      <Ico w={8} h={8} c="#444"><path d="M0 4H8M4 0V8" /></Ico>
      <StatusText>90%</StatusText>
    </StatusItem>
  </StatusBar>
);

export default function App() {
  return (
    <>
      <Global />
      <Shell>
        <TopBar />
        <Tabs />
        <RibbonBar />
        <Formula />
        <SheetArea />
        <BottomScroll />
        <Status />
      </Shell>
    </>
  );
}
